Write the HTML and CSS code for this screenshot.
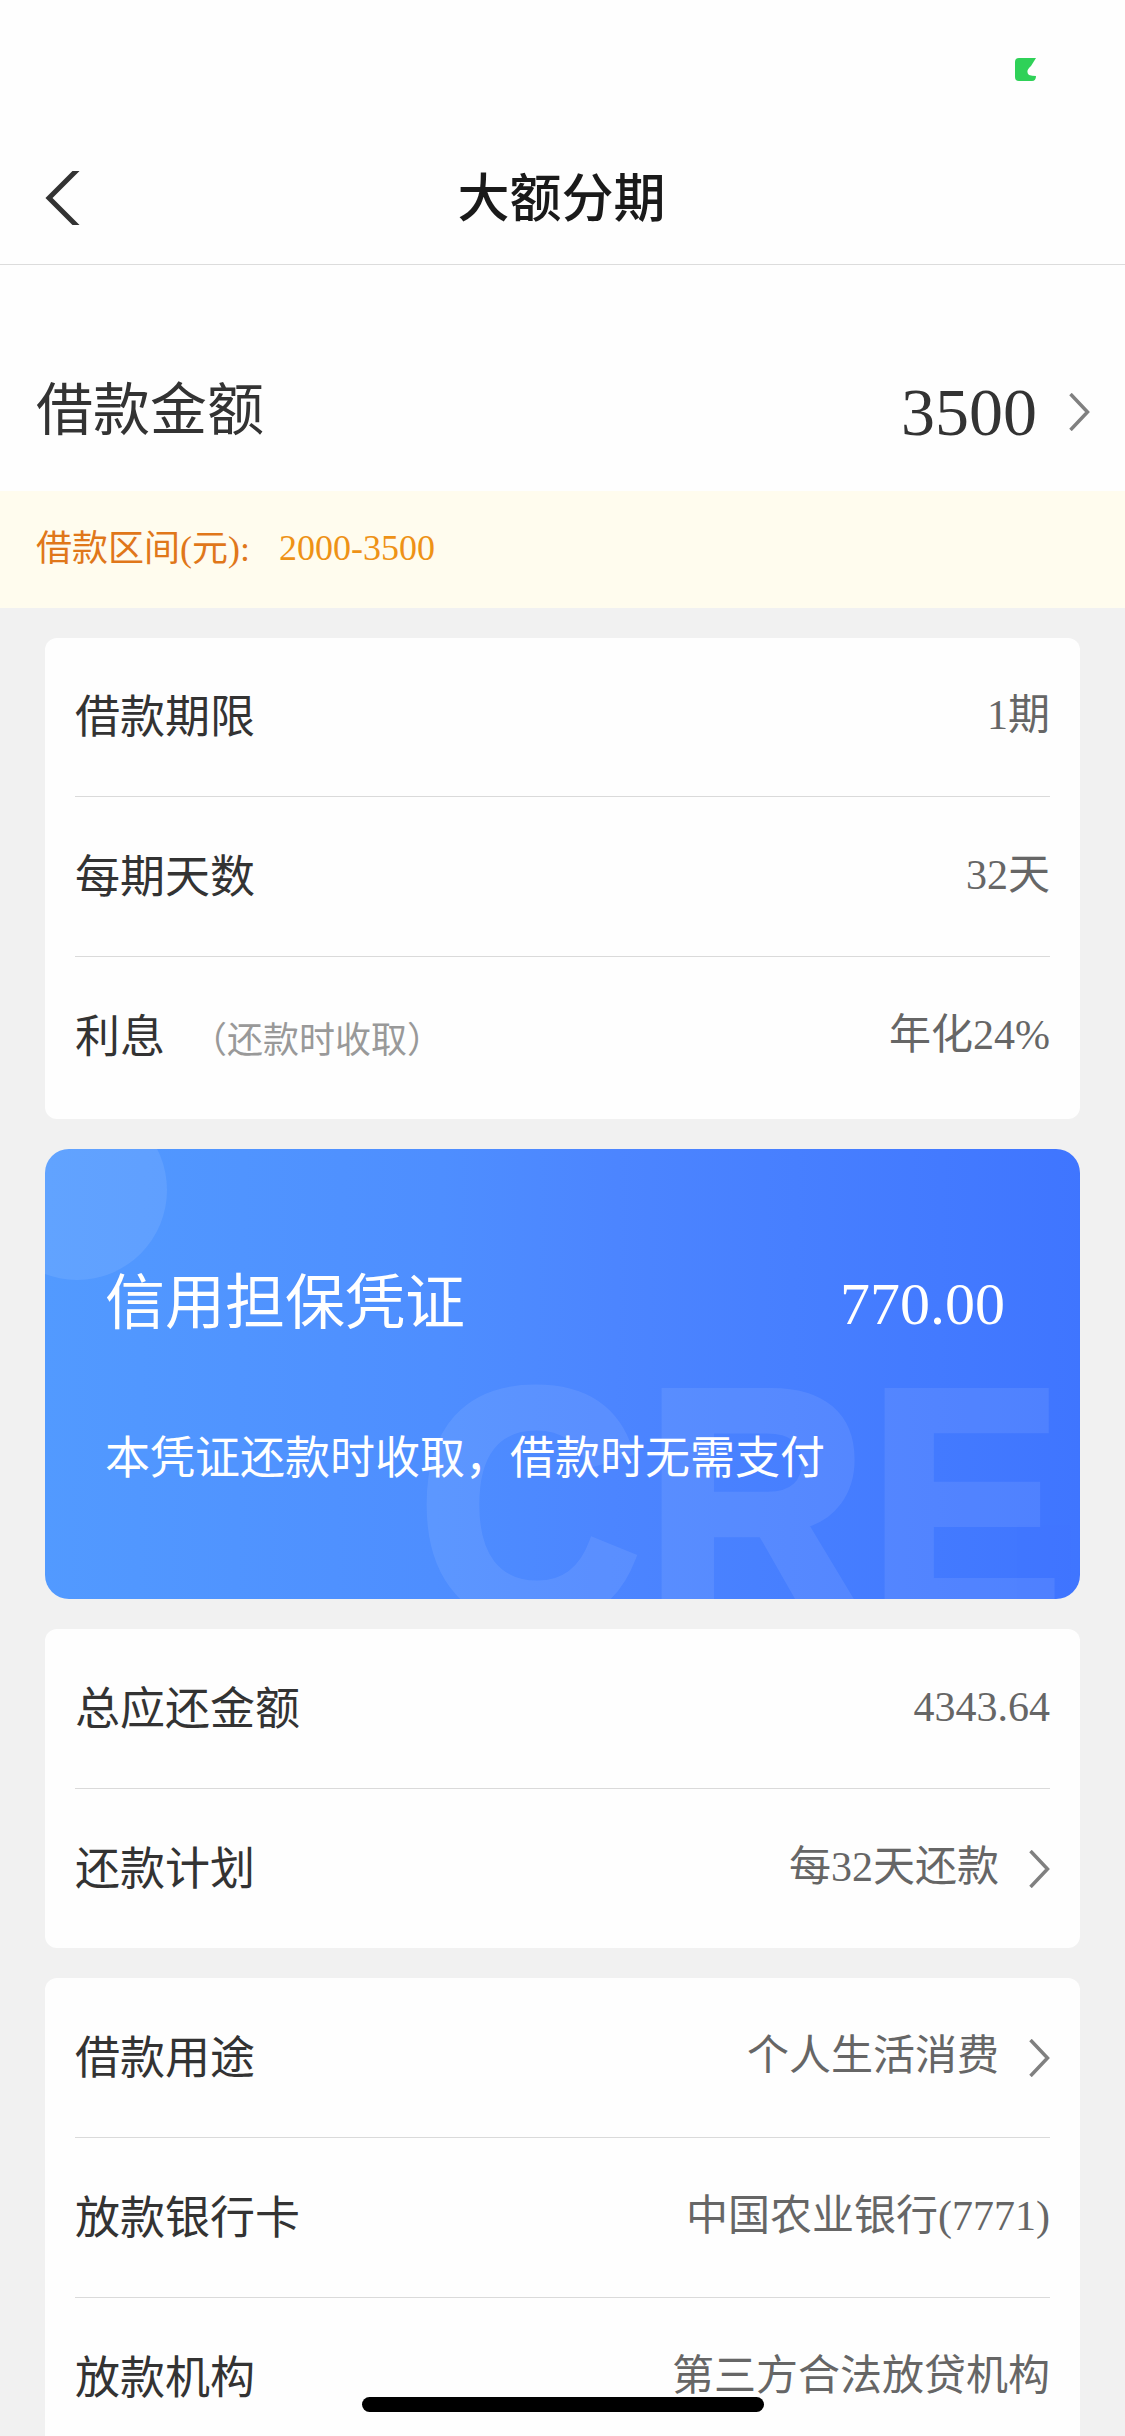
FILE: index.html
```html
<!DOCTYPE html>
<html lang="zh-CN">
<head>
<meta charset="utf-8">
<title>大额分期</title>
<link rel="stylesheet" href="styles.css">
</head>
<body>
<div class="screen">
  <header class="header">
    <svg class="call" width="22" height="23" viewBox="0 0 22 23"><path d="M4 0H21L16 8Q10 13 14 17Q17 18 21 18Q21 23 17 23H4Q0 23 0 19V4Q0 0 4 0Z" fill="#2fd158"/></svg>
    <nav class="navbar">
      <svg class="back" width="36" height="54" viewBox="0 0 36 54"><path d="M37 -5L5 27L37 59" fill="none" stroke="#333" stroke-width="5"/></svg>
      <h1 class="title">大额分期</h1>
    </nav>
  </header>

  <section class="amount">
    <span class="amount-label">借款金额</span>
    <span class="amount-value">3500</span>
    <svg class="chevron amount-chevron" viewBox="0 0 21 38"><path d="M1.5 1L18.5 19L1.5 37"/></svg>
  </section>
  <section class="range">
    <span class="range-label">借款区间<span class="num">(</span>元<span class="num">):</span></span>
    <span class="range-value num">2000-3500</span>
  </section>

  <main class="content">
    <section class="card terms">
      <div class="row"><span class="label">借款期限</span><span class="value"><span class="num">1</span>期</span></div>
      <div class="row"><span class="label">每期天数</span><span class="value"><span class="num">32</span>天</span></div>
      <div class="row"><span class="label">利息<small class="note">（还款时收取）</small></span><span class="value">年化<span class="num">24%</span></span></div>
    </section>

    <section class="voucher">
      <svg class="voucher-art" width="1035" height="450" viewBox="0 0 1035 450">
        <circle cx="32" cy="41" r="90" class="bubble"/>
        <g class="watermark">
          <text transform="translate(373 470) scale(1 1.07)">C</text>
          <text transform="translate(600 470) scale(1 1.07)">R</text>
          <text transform="translate(824 470) scale(.94 1.07)">E</text>
        </g>
      </svg>
      <div class="voucher-head"><span>信用担保凭证</span><span class="num">770.00</span></div>
      <p class="voucher-desc">本凭证还款时收取，借款时无需支付</p>
    </section>

    <section class="card plan">
      <div class="row"><span class="label">总应还金额</span><span class="value"><span class="num">4343.64</span></span></div>
      <div class="row"><span class="label">还款计划</span><span class="value">每<span class="num">32</span>天还款</span><svg class="chevron" viewBox="0 0 21 38"><path d="M1.5 1L18.5 19L1.5 37"/></svg></div>
    </section>

    <section class="card payout">
      <div class="row"><span class="label">借款用途</span><span class="value">个人生活消费</span><svg class="chevron" viewBox="0 0 21 38"><path d="M1.5 1L18.5 19L1.5 37"/></svg></div>
      <div class="row"><span class="label">放款银行卡</span><span class="value">中国农业银行<span class="num">(7771)</span></span></div>
      <div class="row"><span class="label">放款机构</span><span class="value">第三方合法放贷机构</span></div>
    </section>
  </main>
  <div class="home-indicator"></div>
</div>
</body>
</html>
```
FILE: styles.css
```css
* { box-sizing: border-box; }

body {
  margin: 0;
  background: #f1f1f1;
  color: #333;
  font-family: "Noto Sans CJK SC", sans-serif;
}

.screen {
  position: relative;
  width: 1125px;
  height: 2436px;
  overflow: hidden;
}

.num {
  font-family: "Liberation Serif", serif;
  line-height: 1;
}

.header {
  display: flex;
  flex-direction: column;
  height: 265px;
  padding-top: 58px;
  background: #fefefe;
  border-bottom: 1px solid #dcdcdc;
}

.call {
  display: block;
  align-self: flex-end;
  margin-right: 88px;
}

.navbar {
  display: grid;
  grid-template-columns: 79px 1fr 81px;
  align-items: start;
  height: 54px;
  margin-top: 90px;
}

.back {
  display: block;
  margin-left: 44px;
}

.title {
  margin: -6px 0 0;
  text-align: center;
  font-size: 52px;
  font-weight: 500;
  line-height: 60px;
  color: #1a1a1a;
}

.amount {
  display: flex;
  align-items: flex-start;
  height: 226px;
  padding: 100px 35px 0 36px;
  background: #fefefe;
}

.amount-label {
  flex: 1;
  font-size: 57px;
  line-height: 80px;
}

.amount-value {
  font: 68px/80px "Liberation Serif", serif;
  margin-top: 7px;
}

.range {
  display: flex;
  height: 117px;
  padding: 24px 36px 0;
  gap: 29px;
  background: #fffcee;
  font-size: 36px;
  line-height: 60px;
}

.range-label { color: #e0771a; }
.range-value { color: #ee9216; line-height: 67px; }

.content {
  display: grid;
  gap: 30px;
  padding: 30px 45px 0;
}

.card {
  padding: 0 30px;
  background: #fefefe;
  border-radius: 12px;
}

.terms { height: 481px; }
.plan { height: 319px; }
.payout { height: 490px; }

.row {
  display: flex;
  align-items: flex-start;
  height: 160px;
  padding-top: 47px;
  border-bottom: 1px solid #dadada;
}

.row:first-child { height: 159px; padding-top: 46px; }
.plan .row:first-child,
.payout .row:first-child { height: 160px; padding-top: 47px; }
.row:last-child { border-bottom: 0; }

.label {
  flex: 1;
  font-size: 45px;
  line-height: 60px;
}

.note {
  margin-left: 26px;
  font-size: 36px;
  line-height: 1;
  color: #999;
}

.value {
  margin-top: -3px;
  font-size: 42px;
  line-height: 60px;
  color: #666;
}

.chevron {
  display: block;
  width: 21px;
  height: 38px;
  margin: 14px 0 0 30px;
  fill: none;
  stroke: #808080;
  stroke-width: 3.5;
}

.amount-chevron { margin: 28px 0 0 32px; }

.voucher {
  position: relative;
  height: 450px;
  padding: 109px 75px 0 60px;
  overflow: hidden;
  border-radius: 24px;
  background: linear-gradient(91deg, #529aff 0%, #4e8eff 38%, #4c85ff 55%, #477fff 72%, #3f75ff 100%);
  color: #fff;
}

.voucher-art {
  position: absolute;
  inset: 0;
}

.bubble { fill: #fff; opacity: .09; }

.watermark {
  font: bold 308px "Liberation Sans", sans-serif;
  fill: #fff;
  stroke: #fff;
  stroke-width: 8px;
  opacity: .08;
}

.voucher-head {
  position: relative;
  display: flex;
  align-items: baseline;
  justify-content: space-between;
  font-size: 60px;
  line-height: 80px;
}

.voucher-desc {
  position: relative;
  margin: 87px 0 0;
  font-size: 45px;
  line-height: 60px;
}

.home-indicator {
  position: absolute;
  left: 362px;
  top: 2397px;
  width: 402px;
  height: 15px;
  border-radius: 8px;
  background: #000;
}
```
